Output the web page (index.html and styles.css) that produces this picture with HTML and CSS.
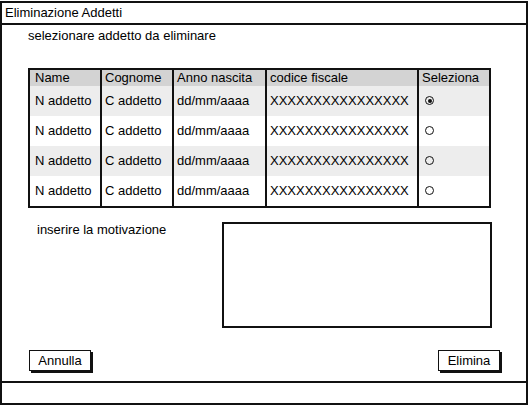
FILE: index.html
```html
<!DOCTYPE html>
<html lang="it">
<head>
    <meta charset="UTF-8">
    <title>Eliminazione Addetti</title>
    <link rel="stylesheet" href="styles.css">
</head>
<body>

    <div class="window">
        <div class="titlebar">Eliminazione Addetti</div>

        <div class="content">
            <div class="subtitle">selezionare addetto da eliminare</div>

            <!-- Tabella addetti -->
            <table class="grid">
                <colgroup>
                    <col class="c-name">
                    <col class="c-surname">
                    <col class="c-year">
                    <col class="c-code">
                    <col class="c-select">
                </colgroup>
                <thead>
                    <tr>
                        <th>Name</th>
                        <th>Cognome</th>
                        <th>Anno nascita</th>
                        <th>codice fiscale</th>
                        <th>Seleziona</th>
                    </tr>
                </thead>
                <tbody>
                    <tr class="odd">
                        <td>N addetto</td>
                        <td>C addetto</td>
                        <td>dd/mm/aaaa</td>
                        <td>XXXXXXXXXXXXXXXX</td>
                        <td><span class="radio checked"></span></td>
                    </tr>
                    <tr>
                        <td>N addetto</td>
                        <td>C addetto</td>
                        <td>dd/mm/aaaa</td>
                        <td>XXXXXXXXXXXXXXXX</td>
                        <td><span class="radio"></span></td>
                    </tr>
                    <tr class="odd">
                        <td>N addetto</td>
                        <td>C addetto</td>
                        <td>dd/mm/aaaa</td>
                        <td>XXXXXXXXXXXXXXXX</td>
                        <td><span class="radio"></span></td>
                    </tr>
                    <tr>
                        <td>N addetto</td>
                        <td>C addetto</td>
                        <td>dd/mm/aaaa</td>
                        <td>XXXXXXXXXXXXXXXX</td>
                        <td><span class="radio"></span></td>
                    </tr>
                </tbody>
            </table>

            <!-- Motivazione -->
            <div class="reason">
                <div class="reason-label">inserire la motivazione</div>
                <div class="reason-box"></div>
            </div>

            <div class="actions">
                <button class="btn">Annulla</button>
                <button class="btn">Elimina</button>
            </div>
        </div>

        <div class="statusbar"></div>
    </div>

</body>
</html>
```
FILE: styles.css
```css
/* General Styles */
body {
    font-family: "Liberation Sans", Arial, sans-serif;
    font-size: 13px;
    color: #000;
    background-color: #fff;
    margin: 0;
    padding: 0;
}

.window {
    box-sizing: border-box;
    width: 528px;
    height: 404px;
    margin-top: 1px;
    border: 2px solid #111;
    display: flex;
    flex-direction: column;
}

.titlebar {
    height: 20px;
    line-height: 20px;
    padding-left: 3px;
    border-bottom: 2px solid #111;
}

.content {
    flex: 1;
    display: flex;
    flex-direction: column;
}

.subtitle {
    margin: 3px 0 0 26px;
    line-height: 16px;
}

/* Table */
.grid {
    margin: 24px 0 0 26px;
    width: 463px;
    border: 2px solid #111;
    border-spacing: 0;
    table-layout: fixed;
}

.c-name { width: 70px; }
.c-surname { width: 72px; }
.c-year { width: 93px; }
.c-code { width: 152px; }
.c-select { width: 72px; }

.grid th, .grid td {
    padding: 0 0 0 3px;
    text-align: left;
    font-weight: normal;
    white-space: nowrap;
    overflow: hidden;
    border-left: 2px solid #111;
}

.grid th:first-child, .grid td:first-child {
    border-left: none;
    padding-left: 5px;
}

.grid th {
    height: 16px;
    line-height: 16px;
    background-color: #d3d3d3;
}

.grid td {
    height: 30px;
    line-height: 30px;
}

.grid tr.odd td {
    background-color: #ededed;
}

.radio {
    display: inline-block;
    box-sizing: border-box;
    width: 9px;
    height: 9px;
    margin-left: 3px;
    border: 1px solid #111;
    border-radius: 50%;
    vertical-align: middle;
    position: relative;
    top: -1px;
}

.radio.checked::after {
    content: "";
    position: absolute;
    left: 1.5px;
    top: 1.5px;
    width: 4px;
    height: 4px;
    border-radius: 50%;
    background-color: #111;
}

/* Motivazione */
.reason {
    display: flex;
    margin-top: 14px;
}

.reason-label {
    width: 185px;
    margin-left: 35px;
    line-height: 16px;
}

.reason-box {
    box-sizing: border-box;
    width: 270px;
    height: 106px;
    border: 2px solid #111;
}

/* Buttons */
.actions {
    display: flex;
    justify-content: space-between;
    margin: 22px 26px 0 27px;
}

.btn {
    box-sizing: border-box;
    width: 62px;
    height: 21px;
    padding: 0;
    font-family: inherit;
    font-size: 13px;
    color: #000;
    background-color: #fff;
    border: 1px solid #111;
    box-shadow: 2px 2px 0 #111;
}

.statusbar {
    margin-top: auto;
    height: 20px;
    border-top: 2px solid #111;
}
```
